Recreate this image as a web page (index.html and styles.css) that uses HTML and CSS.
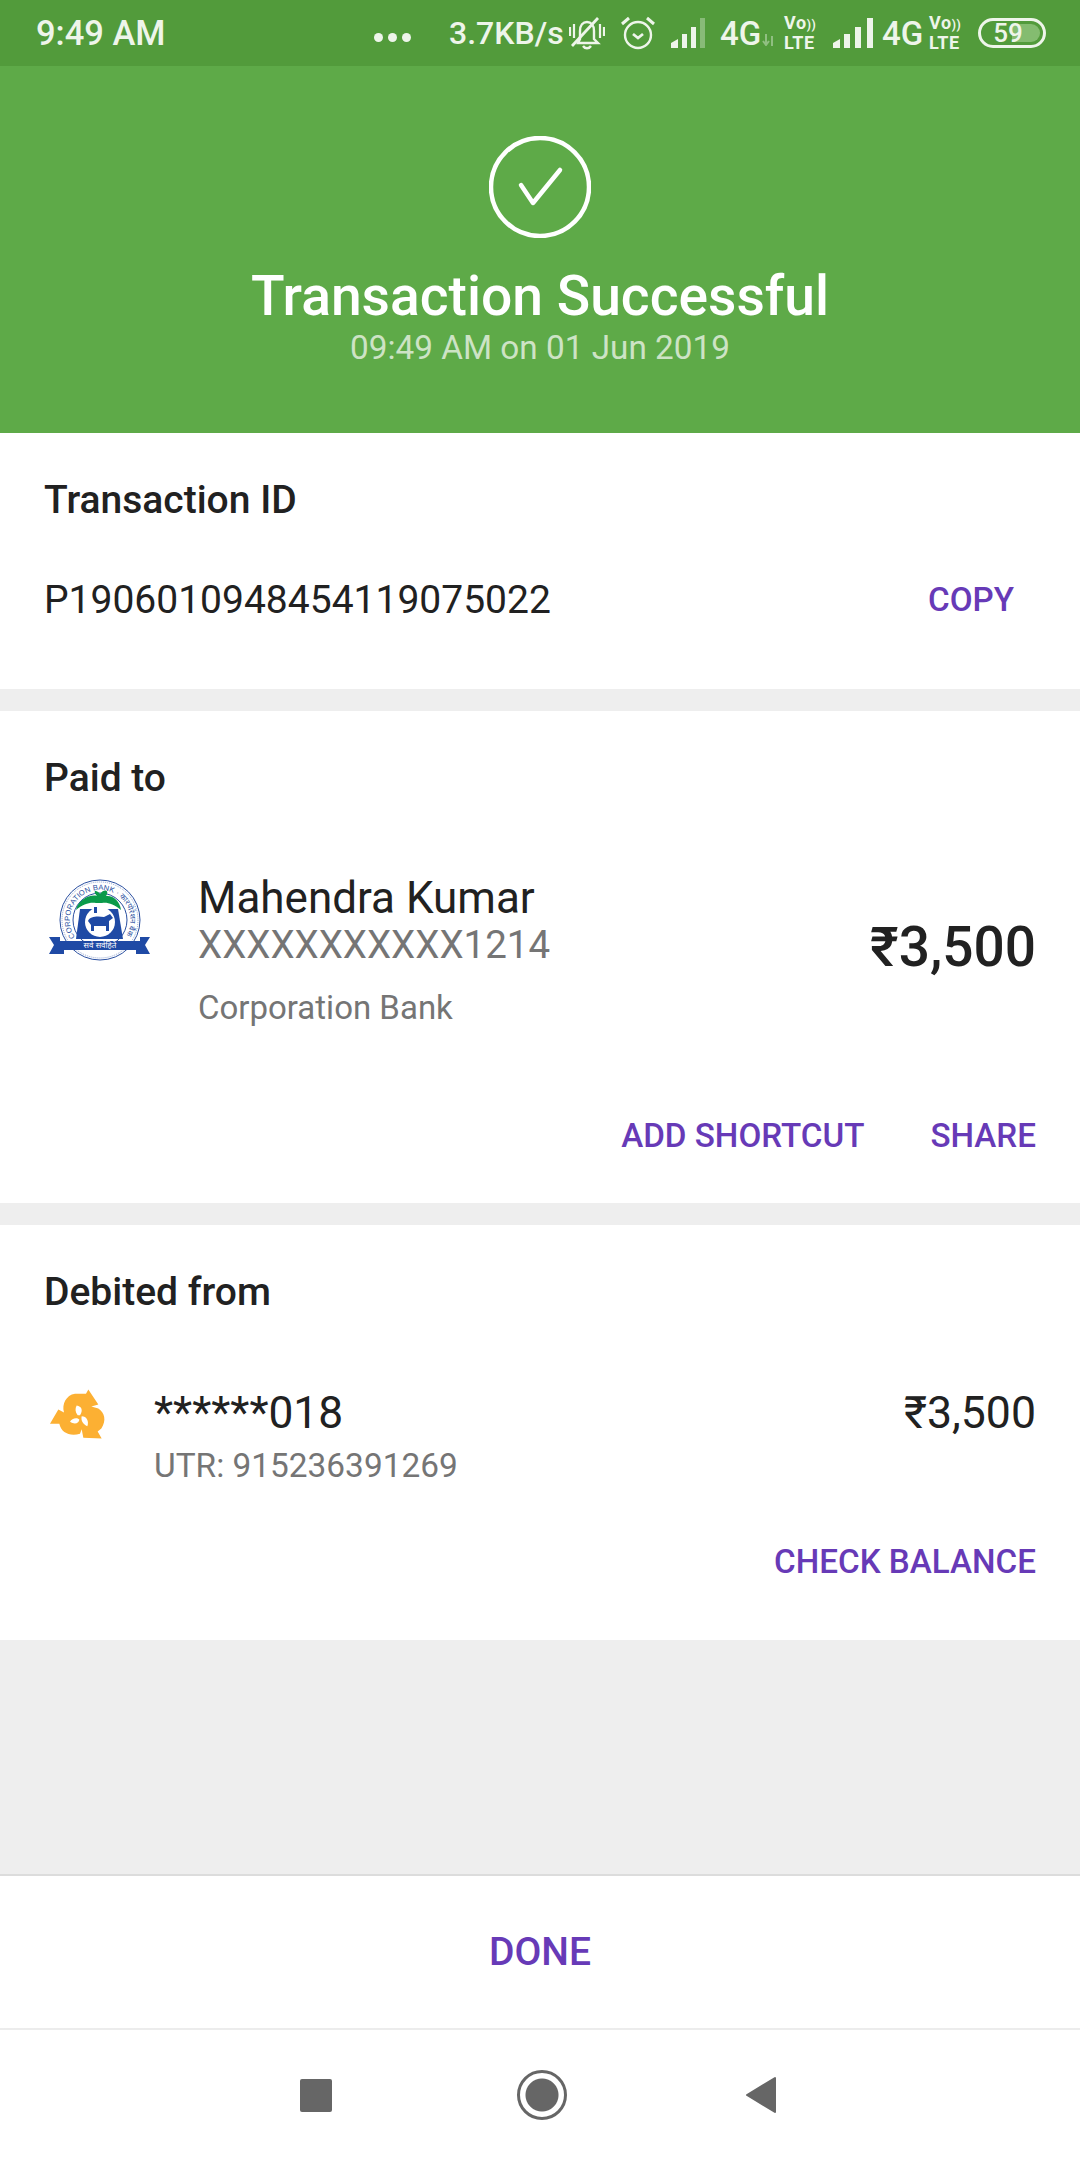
FILE: index.html
```html
<!DOCTYPE html>
<html lang="en">
<head>
    <meta charset="UTF-8">
    <meta name="viewport" content="width=device-width, initial-scale=1.0">
    <title>Transaction Successful</title>
    <link rel="stylesheet" href="styles.css">
</head>
<body>
    <div class="app">
        <div class="status-bar">
            <span class="status-time">9:49 AM</span>
            <span class="status-dots"><i></i><i></i><i></i></span>
            <span class="status-speed">3.7KB/s</span>
            <svg class="icon-bell" width="36" height="34" viewBox="0 0 36 34" fill="none" stroke="#eef5ea" stroke-width="2.4">
                <path d="M9 27 L11 23 V15 C11 9 14 6 18 6 C22 6 25 9 25 15 V23 L29 27 Z"/>
                <path d="M14 30 C16 33 20 33 22 30" stroke-width="2.4"/>
                <path d="M1 11 V20 M5 8 V22 M31 8 V22 M35 11 V20" stroke-width="2.2"/>
                <path d="M3 30 L29 2" stroke-width="2.8"/>
            </svg>
            <svg class="icon-alarm" width="36" height="34" viewBox="0 0 36 34" fill="none" stroke="#eef5ea" stroke-width="2.4">
                <circle cx="18" cy="19" r="13"/>
                <path d="M13 18 L18 22 L23 18" stroke-width="2.8"/>
                <path d="M2 8 L9 2 M27 2 L34 8" stroke-width="3"/>
            </svg>
            <svg class="icon-signal" width="34" height="30" viewBox="0 0 34 30" fill="#eef5ea">
                <path d="M0 30 V25 L7 21 V30 Z"/>
                <rect x="11" y="16" width="5" height="14"/>
                <rect x="20" y="9" width="5" height="21"/>
                <rect x="29" y="0" width="5" height="30" opacity="0.35"/>
            </svg>
            <span class="status-net">4G</span>
            <svg class="icon-arrows" width="13" height="12" viewBox="0 0 13 12" stroke="#eef5ea" stroke-width="2" fill="none" opacity="0.4">
                <path d="M4 0 V10 M1 7 L4 11 L7 7 M10 12 V2"/>
            </svg>
            <span class="status-volte"><span>Vo<small>))</small></span><span>LTE</span></span>
            <svg class="icon-signal second" width="40" height="30" viewBox="0 0 40 30" fill="#eef5ea">
                <path d="M0 30 V25 L7 21 V30 Z"/>
                <rect x="11" y="16" width="6" height="14"/>
                <rect x="22" y="9" width="6" height="21"/>
                <rect x="34" y="0" width="6" height="30"/>
            </svg>
            <span class="status-net second">4G</span>
            <span class="status-volte second"><span>Vo<small>))</small></span><span>LTE</span></span>
            <span class="battery"><span class="battery-fill"></span><span class="battery-num">59</span></span>
        </div>

        <header class="result-head">
            <svg class="check" width="102" height="102" viewBox="0 0 102 102" fill="none" stroke="#fff">
                <circle cx="51" cy="51" r="49" stroke-width="4.5"/>
                <path d="M32 49 L44 67 L71 34" stroke-width="4.5" stroke-linecap="round" stroke-linejoin="round"/>
            </svg>
            <h1>Transaction Successful</h1>
            <p>09:49 AM on 01 Jun 2019</p>
        </header>

        <section class="card card-id">
            <h2>Transaction ID</h2>
            <div class="id-row">
                <span class="id-value">P1906010948454119075022</span>
                <a class="action copy" href="#">COPY</a>
            </div>
        </section>

        <section class="card card-paid">
            <h2>Paid to</h2>
            <div class="payee">
                <svg class="bank-logo" width="104" height="84" viewBox="0 0 104 84">
                    <circle cx="54" cy="41" r="40" fill="#fff" stroke="#2a4fa0" stroke-width="1"/>
                    <circle cx="54" cy="41" r="38" fill="none" stroke="#2a4fa0" stroke-width="0.5" stroke-dasharray="1 1"/>
                    <circle cx="54" cy="41" r="27" fill="#fff" stroke="#2a4fa0" stroke-width="1"/>
                    <path id="bank-arc" d="M29 58 A30.2 30.2 0 1 1 79 58" fill="none"/>
                    <text class="bank-arc-text"><textPath href="#bank-arc" textLength="128">CORPORATION BANK · कारपोरेशन बैंक</textPath></text>
                    <path d="M34 30 H72 L77 60 H30 Z" fill="#1f4aa5"/>
                    <circle cx="54" cy="43" r="15" fill="#fff"/>
                    <rect x="48" y="28" width="3" height="6" fill="#1f4aa5"/>
                    <path d="M42 42 C44 37 52 37 58 38 L64 35 L67 39 L63 42 V52 H60 V47 H48 V52 H45 V46 Z" fill="#1f4aa5"/>
                    <path d="M30 31 C32 21 44 15 51 17 C46 12 50 10 54 15 C58 9 64 11 60 17 C67 16 74 22 75 31 C68 25 61 23 56 24 H50 C44 23 37 25 30 31 Z" fill="#0a9a4a"/>
                    <path d="M3 58 H14 V62 H94 V58 H104 L99 66 L104 75 H90 V71 H18 V75 H3 L8 66 Z" fill="#1f4aa5"/>
                    <text class="bank-motto" x="54" y="69" text-anchor="middle">सर्व   सर्वहिते</text>
                </svg>
                <div class="payee-info">
                    <div class="payee-name">Mahendra Kumar</div>
                    <div class="payee-acct">XXXXXXXXXXX1214</div>
                    <div class="payee-bank">Corporation Bank</div>
                </div>
                <div class="payee-amount">₹3,500</div>
            </div>
            <div class="actions">
                <a class="action" href="#">ADD SHORTCUT</a>
                <a class="action" href="#">SHARE</a>
            </div>
        </section>

        <section class="card card-debit">
            <h2>Debited from</h2>
            <div class="debit">
                <svg class="debit-logo" width="65" height="57" viewBox="45 45 195 170">
                    <path fill="#fcb033" d="M175 55 L205 100 L184 106 L205 112 C224 124 230 148 214 172 L203 181 L215 202 L160 200 L155 174 L150 188 C120 196 94 186 88 158 L60 158 L85 115 L102 124 C95 100 108 72 135 68 L168 68 Z"/>
                    <path fill="#fff" d="M140 103 C155 105 160 118 150 132 L143 132 C135 122 135 112 140 103 Z M120 152 C125 142 140 138 148 145 C148 155 135 162 120 152 Z M155 135 C170 135 178 150 172 165 C160 160 152 148 155 135 Z"/>
                </svg>
                <div class="debit-info">
                    <div class="debit-acct">******018</div>
                    <div class="debit-utr">UTR: 915236391269</div>
                </div>
                <div class="debit-amount">₹3,500</div>
            </div>
            <div class="actions">
                <a class="action" href="#">CHECK BALANCE</a>
            </div>
        </section>

        <div class="spacer"></div>

        <div class="done-bar"><a href="#">DONE</a></div>

        <nav class="nav-bar">
            <span class="nav-square"></span>
            <span class="nav-home"></span>
            <svg class="nav-back" width="32" height="38" viewBox="0 0 32 38">
                <path d="M30 2 V36 L2 19 Z" fill="#666" stroke="#666" stroke-width="2" stroke-linejoin="round"/>
            </svg>
        </nav>
    </div>
</body>
</html>
```

FILE: styles.css
```css
* {
    box-sizing: border-box;
}

body {
    margin: 0;
    font-family: Roboto, "Liberation Sans", sans-serif;
    background-color: #eeeeee;
    color: #212121;
}

.app {
    width: 1080px;
    height: 2160px;
    display: flex;
    flex-direction: column;
    overflow: hidden;
}

/* status bar */
.status-bar {
    height: 66px;
    flex: none;
    display: flex;
    align-items: center;
    padding-left: 36px;
    background-color: #529b3b;
    color: #eef5ea;
    font-weight: 500;
}

.status-time {
    font-size: 34.5px;
    width: 338px;
}

.status-dots {
    display: flex;
    gap: 5px;
    width: 75px;
    padding-top: 9px;
}

.status-dots i {
    width: 9px;
    height: 9px;
    border-radius: 50%;
    background-color: #eef5ea;
}

.status-speed {
    font-size: 32px;
    width: 120px;
}

.icon-alarm {
    margin-left: 15px;
}

.icon-signal {
    margin-left: 15px;
}

.icon-signal.second {
    margin-left: 16px;
}

.status-net {
    font-size: 33px;
    margin-left: 15px;
    width: 42px;
}

.status-net.second {
    margin-left: 9px;
    width: 47px;
}

.icon-arrows {
    margin-top: 14px;
}

.status-volte {
    margin-left: 9px;
    display: flex;
    flex-direction: column;
    align-items: flex-start;
    font-size: 18px;
    line-height: 18px;
    letter-spacing: 0.6px;
    font-weight: 700;
    width: 33px;
}

.status-volte small {
    font-size: 12px;
}

.status-volte.second {
    margin-left: 0;
}

.battery {
    margin-left: 16px;
    position: relative;
    width: 68px;
    height: 30px;
    border: 3px solid #eef5ea;
    border-radius: 15px;
    display: flex;
    align-items: center;
    justify-content: center;
}

.battery-fill {
    position: absolute;
    left: 3px;
    top: 3px;
    bottom: 3px;
    right: 3px;
    border-radius: 10px;
    background: linear-gradient(to right, transparent 50%, #84bc70 50%);
}

.battery-num {
    position: relative;
    font-size: 26px;
    margin-right: 8px;
}

/* green header */
.result-head {
    height: 367px;
    flex: none;
    display: flex;
    flex-direction: column;
    align-items: center;
    padding-top: 70px;
    background-color: #5eaa48;
    color: #fff;
}

.result-head h1 {
    margin: 26px 0 0;
    font-size: 55.2px;
    line-height: 64px;
    font-weight: 500;
}

.result-head p {
    margin: 1px 0 0;
    font-size: 33.3px;
    line-height: 38px;
    color: #cde3c5;
}

/* cards */
.card {
    flex: none;
    background-color: #fff;
    padding: 0 44px;
}

.card h2 {
    margin: 0;
    font-size: 39px;
    line-height: 44px;
    font-weight: 500;
}

.card-id {
    height: 256px;
    padding-top: 45px;
    margin-bottom: 22px;
}

.id-row {
    display: flex;
    justify-content: space-between;
    align-items: center;
    margin-top: 56px;
    padding-right: 22px;
}

.id-value {
    font-size: 39px;
    line-height: 44px;
}

.action {
    font-size: 33.2px;
    line-height: 40px;
    font-weight: 500;
    color: #673ab7;
    text-decoration: none;
}

.card-paid {
    height: 492px;
    padding-top: 45px;
    margin-bottom: 22px;
}

.payee {
    display: flex;
    align-items: flex-start;
    margin-top: 73px;
}

.bank-logo {
    margin: 6px 0 0 2px;
    flex: none;
}

.bank-arc-text {
    font-size: 7.5px;
    font-family: "Liberation Sans", "Noto Sans", sans-serif;
    fill: #2a4fa0;
}

.bank-motto {
    font-size: 8px;
    font-family: "Liberation Sans", "Noto Sans", sans-serif;
    fill: #fff;
}

.payee-info {
    margin-left: 48px;
    flex: 1;
}

.payee-name {
    font-size: 44px;
    line-height: 50px;
}

.payee-acct {
    font-size: 38.5px;
    line-height: 44px;
    color: #757575;
}

.payee-bank {
    margin-top: 21px;
    font-size: 33px;
    line-height: 40px;
    color: #757575;
}

.payee-amount {
    margin-top: 42px;
    font-size: 55px;
    line-height: 64px;
    font-weight: 500;
}

.actions {
    display: flex;
    justify-content: flex-end;
    gap: 66px;
}

.card-paid .actions {
    margin-top: 88px;
}

.card-debit {
    height: 415px;
    padding-top: 45px;
}

.debit {
    display: flex;
    align-items: flex-start;
    margin-top: 74px;
}

.debit-logo {
    margin: -2px 0 0 1px;
    flex: none;
}

.debit-info {
    margin-left: 44px;
    flex: 1;
}

.debit-acct {
    font-size: 44.3px;
    line-height: 50px;
}

.debit-utr {
    margin-top: 8px;
    font-size: 33.4px;
    line-height: 40px;
    color: #757575;
}

.debit-amount {
    font-size: 44.6px;
    line-height: 50px;
}

.card-debit .actions {
    margin-top: 56px;
}

.spacer {
    flex: 1;
}

/* bottom */
.done-bar {
    height: 156px;
    flex: none;
    display: flex;
    align-items: center;
    justify-content: center;
    background-color: #fff;
    border-top: 2px solid #dcdcdc;
    border-bottom: 2px solid #ececec;
}

.done-bar a {
    font-size: 39px;
    font-weight: 500;
    color: #673ab7;
    text-decoration: none;
}

.nav-bar {
    height: 130px;
    flex: none;
    display: flex;
    align-items: center;
    background-color: #fff;
    padding-left: 300px;
}

.nav-square {
    width: 32px;
    height: 33px;
    border-radius: 2px;
    background-color: #666;
}

.nav-home {
    margin-left: 185px;
    width: 50px;
    height: 50px;
    border-radius: 50%;
    border: 3px solid #666;
    background: radial-gradient(circle, #666 0, #666 16px, #fff 17px);
}

.nav-back {
    margin-left: 178px;
}
```
